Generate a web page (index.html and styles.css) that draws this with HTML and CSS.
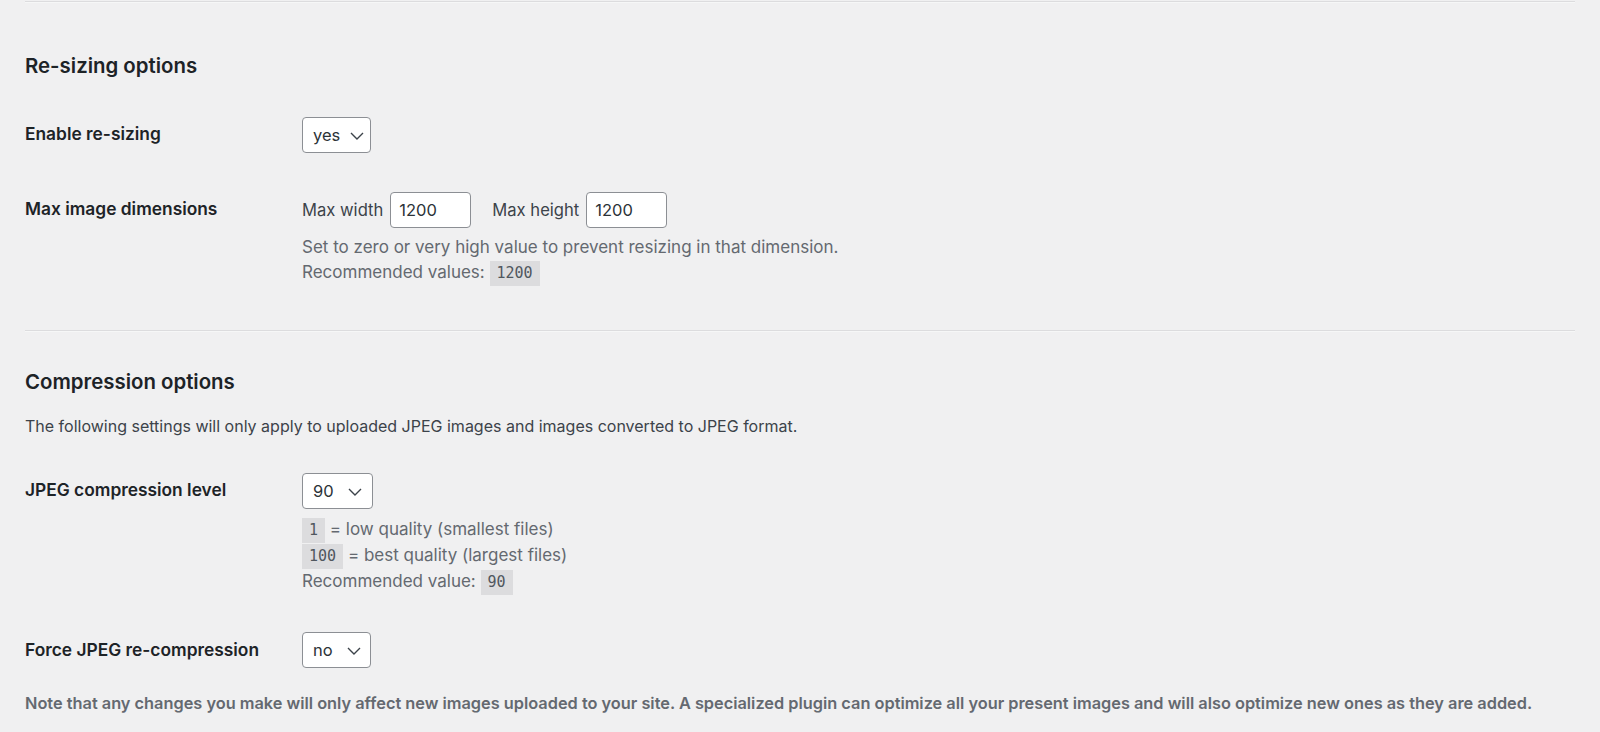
FILE: index.html
```html
<!DOCTYPE html>
<html lang="en">
<head>
<meta charset="utf-8">
<title>Image settings</title>
<link rel="stylesheet" href="styles.css">
</head>
<body>
<div class="wrap">
  <hr class="sep sep-top">

  <h2 class="title title-first">Re-sizing options</h2>

  <div class="row row-enable">
    <div class="label">Enable re-sizing</div>
    <div class="field">
      <div class="select select-yes"><span>yes</span><svg class="chev" viewBox="0 0 14 8" width="14" height="8"><polyline points="1,1 7,7 13,1" fill="none" stroke="#3c434a" stroke-width="1.4"/></svg></div>
    </div>
  </div>

  <div class="row row-dims">
    <div class="label label-dims">Max image dimensions</div>
    <div class="field">
      <div class="inline">
        <span class="inl-text">Max width</span><div class="input">1200</div>
        <span class="inl-text inl-second">Max height</span><div class="input">1200</div>
      </div>
      <div class="desc desc-dims">
        Set to zero or very high value to prevent resizing in that dimension.<br>
        Recommended values: <code>1200</code>
      </div>
    </div>
  </div>

  <hr class="sep sep-mid">

  <h2 class="title title-second">Compression options</h2>
  <p class="intro">The following settings will only apply to uploaded JPEG images and images converted to JPEG format.</p>

  <div class="row row-level">
    <div class="label">JPEG compression level</div>
    <div class="field">
      <div class="select select-90"><span>90</span><svg class="chev" viewBox="0 0 14 8" width="14" height="8"><polyline points="1,1 7,7 13,1" fill="none" stroke="#3c434a" stroke-width="1.4"/></svg></div>
      <div class="desc desc-level">
        <code>1</code> = low quality (smallest files)<br>
        <code>100</code> = best quality (largest files)<br>
        Recommended value: <code>90</code>
      </div>
    </div>
  </div>

  <div class="row row-force">
    <div class="label label-force">Force JPEG re-compression</div>
    <div class="field">
      <div class="select select-no"><span>no</span><svg class="chev" viewBox="0 0 14 8" width="14" height="8"><polyline points="1,1 7,7 13,1" fill="none" stroke="#3c434a" stroke-width="1.4"/></svg></div>
    </div>
  </div>

  <p class="note">Note that any changes you make will only affect new images uploaded to your site. A specialized plugin can optimize all your present images and will also optimize new ones as they are added.</p>
</div>
</body>
</html>
```

FILE: styles.css
```css
html, body {
  margin: 0;
  padding: 0;
}

body {
  background: #f0f0f1;
  color: #1d2327;
  font-family: Inter, "Noto Sans", "Liberation Sans", sans-serif;
  font-size: 16px;
  overflow: hidden;
}

.wrap {
  padding: 0 25px;
}

.sep {
  border: 0;
  border-top: 1px solid #dcdcde;
  border-bottom: 1px solid #f6f7f7;
  height: 0;
  margin: 0;
}

.sep-top {
  margin-top: 1px;
}

.sep-mid {
  margin-top: 44px;
}

.title {
  font-size: 20.4px;
  font-weight: 600;
  line-height: 28px;
  margin: 0;
  color: #1d2327;
}

.title-first {
  margin-top: 49px;
}

.title-second {
  margin-top: 36px;
}

.row {
  display: grid;
  grid-template-columns: 277px 1fr;
  align-items: start;
}

.row-enable {
  margin-top: 37px;
}

.row-dims {
  margin-top: 39px;
}

.row-level {
  margin-top: 35px;
}

.row-force {
  margin-top: 37px;
}

.label {
  font-size: 17.35px;
  font-weight: 600;
  line-height: 34px;
  color: #1d2327;
}

.label-force {
  line-height: 36px;
}

.field {
  display: flex;
  flex-direction: column;
  align-items: flex-start;
}

.select {
  box-sizing: border-box;
  height: 36px;
  border: 1px solid #8c8f94;
  border-radius: 4px;
  background: #fff;
  display: flex;
  align-items: center;
  padding: 0 8px 0 10px;
  font-size: 16.5px;
  color: #2c3338;
  gap: 10px;
}

.select-yes { width: 69px; }
.select-90 { width: 71px; gap: 14px; }
.select-no { width: 69px; gap: 14px; }

.chev {
  display: block;
  flex: none;
  margin-top: 1px;
}

.inline {
  display: flex;
  align-items: center;
  height: 36px;
}

.inl-text {
  font-size: 16.6px;
  color: #3c434a;
  margin-right: 7px;
}

.inl-second {
  margin-left: 21px;
}

.input {
  box-sizing: border-box;
  width: 81px;
  height: 36px;
  border: 1px solid #8c8f94;
  border-radius: 4px;
  background: #fff;
  padding: 0 8px;
  display: flex;
  align-items: center;
  font-size: 16.5px;
  color: #2c3338;
}

.desc {
  color: #646970;
  font-size: 17px;
}

.desc-dims {
  margin-top: 7px;
  line-height: 25px;
}

.desc-level {
  margin-top: 8px;
  line-height: 25.5px;
}

code {
  display: inline-block;
  font-family: "DejaVu Sans Mono", "Liberation Mono", monospace;
  font-size: 15px;
  line-height: 25px;
  padding: 0 7px;
  background: #dcdcde;
  color: #50575e;
  vertical-align: baseline;
}

.intro {
  margin: 18px 0 0;
  font-size: 16px;
  line-height: 24px;
  color: #3c434a;
}

.note {
  margin: 23px 0 0;
  font-size: 16.33px;
  font-weight: 600;
  line-height: 24px;
  color: #646970;
}
```
